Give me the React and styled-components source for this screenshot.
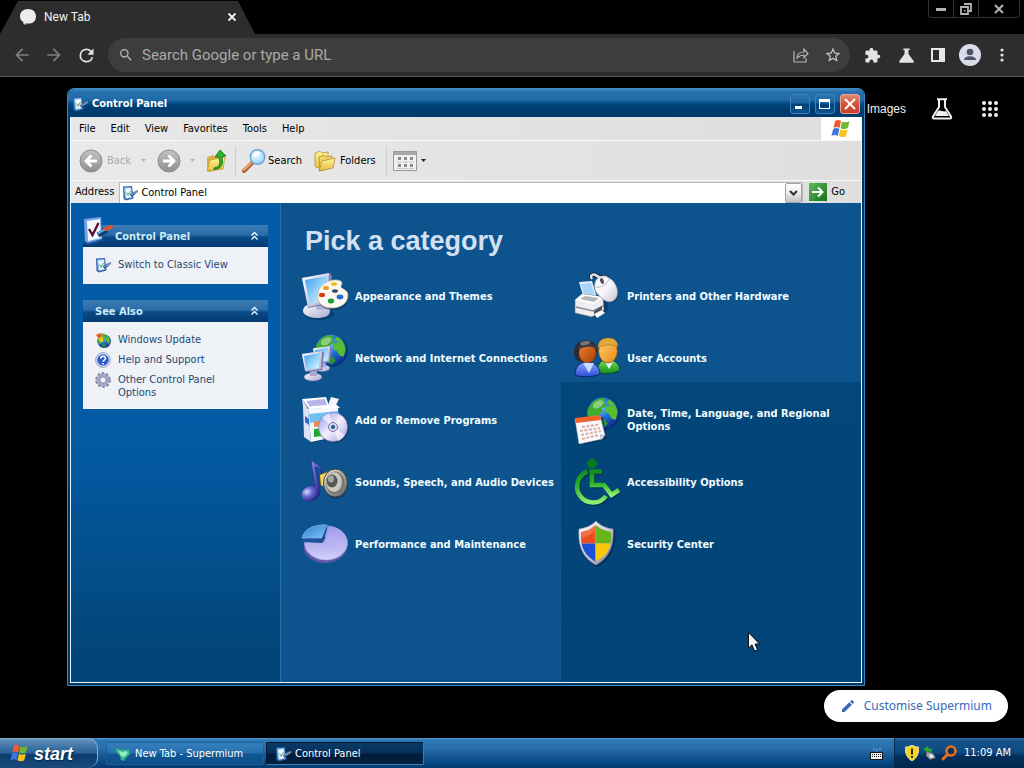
import React from "react";
import styled, { createGlobalStyle, css } from "styled-components";

const Global = createGlobalStyle`
  *, *::before, *::after { box-sizing: border-box; }
  body { margin: 0; background: #000; }
  button, input { font: inherit; color: inherit; margin: 0; padding: 0; border: 0; background: none; outline: 0; }
  a { color: inherit; text-decoration: none; }
  svg { display: block; flex: none; }
`;

const uiFont = `"DejaVu Sans Condensed", "DejaVu Sans", Tahoma, sans-serif`;
const webFont = `Roboto, "Liberation Sans", Arial, sans-serif`;

const Desktop = styled.div`
  position: relative;
  display: flex;
  flex-direction: column;
  min-height: 100vh;
  background: #000;
  overflow: hidden;
  font: 11px/14px ${uiFont};
`;

/* ---------- browser ---------- */

const TabStrip = styled.div`
  display: flex;
  justify-content: space-between;
  align-items: flex-start;
  height: 34px;
  padding-right: 4px;
`;

const Tab = styled.div`
  display: flex;
  align-items: center;
  gap: 8px;
  width: 255px;
  height: 34px;
  padding: 0 17px 0 20px;
  background: #2d2d2d;
  clip-path: polygon(18px 1px, 238px 1px, 255px 34px, 0 34px);
  color: #f4f4f4;
  font: 12px/16px ${webFont};
`;

const TabTitle = styled.span`
  flex: 1;
`;

const PlainButton = styled.button`
  display: flex;
  align-items: center;
  justify-content: center;
  width: ${(p) => p.$w || 24}px;
  height: ${(p) => p.$h || 24}px;
  color: ${(p) => p.$color || "#e3e3e3"};
`;

const FrameButtons = styled.div`
  display: flex;
  border: 1px solid #333;
  border-top: 0;
  border-radius: 0 0 4px 4px;
  & > * + * { border-left: 1px solid #333; }
`;

const BrowserBar = styled.div`
  display: flex;
  align-items: center;
  gap: 8px;
  height: 43px;
  padding: 0 10px;
  background: #2d2d2d;
  border-bottom: 1px solid #555;
`;

const Omnibox = styled.label`
  display: flex;
  flex: 1;
  align-items: center;
  gap: 8px;
  height: 34px;
  margin-left: 2px;
  padding: 0 5px 0 10px;
  border-radius: 17px;
  background: #3d3d3d;
`;

const OmniInput = styled.input`
  flex: 1;
  min-width: 0;
  color: #c8c8c8;
  font: 15px/20px ${webFont};
  &::placeholder { color: #aaa; opacity: 1; }
`;

const NewTabPage = styled.main`
  display: flex;
  flex: 1;
  flex-direction: column;
  align-items: flex-end;
  justify-content: space-between;
  padding: 16px;
`;

const PageLinks = styled.nav`
  display: flex;
  align-items: center;
  gap: 24px;
  height: 32px;
  padding-right: 6px;
  color: #f0f0f0;
  font: 12px/16px "Liberation Sans", Arial, sans-serif;
`;

const CustomiseButton = styled.button`
  display: flex;
  align-items: center;
  gap: 8px;
  height: 32px;
  padding: 0 16px;
  border-radius: 16px;
  background: #fff;
  color: #3569b8;
  font: 12px/20px "Noto Sans", sans-serif;
`;

/* ---------- control panel window ---------- */

const Window = styled.section`
  position: absolute;
  top: 88px;
  right: 159px;
  bottom: 82px;
  left: 67px;
  display: flex;
  flex-direction: column;
  padding: 0 2px 2px;
  border: 1px solid #3e86c0;
  border-radius: 7px 7px 0 0;
  background: #013862;
`;

const TitleBar = styled.header`
  display: flex;
  align-items: center;
  gap: 2px;
  height: 28px;
  margin: 0 -2px;
  padding: 2px 4px 0;
  border-radius: 6px 6px 0 0;
  background: linear-gradient(#4389c0 0, #2570ac 3px, #1f6aa8 11px, #01467f 15px, #003c70 20px, #003b6c);
  color: #fff;
  font-weight: bold;
`;

const WindowTitle = styled.h1`
  flex: 1;
  margin: 0;
  font: inherit;
`;

const CaptionButton = styled.button`
  display: flex;
  align-items: center;
  justify-content: center;
  width: 20px;
  height: 20px;
  margin-left: 3px;
  border: 1px solid ${(p) => (p.$close ? "#e9a294" : "#3f80b6")};
  border-radius: 3px;
  background: ${(p) =>
    p.$close
      ? "linear-gradient(#e58a76, #d4523c 50%, #c5402b)"
      : "linear-gradient(#2b75b0, #1c639f 45%, #003f76 50%, #0b5490)"};
`;

const Chrome = styled.div`
  display: flex;
  flex: 1;
  flex-direction: column;
  min-height: 0;
  border: 1px solid #f2f6fa;
  border-top: 0;
  background: #e3e3e3;
  color: #000;
`;

const MenuBar = styled.nav`
  display: flex;
  align-items: stretch;
  height: 24px;
  padding-left: 8px;
  border-bottom: 1px solid #fafafa;
  background: linear-gradient(90deg, #e8e8e8, #dedede);
`;

const MenuItem = styled.button`
  margin-right: 15px;
`;

const FlagCell = styled.div`
  display: flex;
  align-items: center;
  justify-content: center;
  width: 40px;
  margin-left: auto;
  background: #fff;
`;

const ToolBar = styled.div`
  display: flex;
  align-items: center;
  height: 40px;
  padding-left: 8px;
  border-bottom: 1px solid #fafafa;
  background: linear-gradient(90deg, #e9e9e9, #dfdfdf);
`;

const ToolButton = styled.button`
  display: flex;
  align-items: center;
  gap: ${(p) => p.$gap || 4}px;
  margin-right: ${(p) => p.$after || 0}px;
  color: ${(p) => (p.$dim ? "#a9a9a9" : "#000")};
`;

const Divider = styled.span`
  width: 1px;
  height: 30px;
  margin: 0 6px;
  background: #cdcdcd;
`;

const AddressBar = styled.div`
  display: flex;
  align-items: center;
  height: 22px;
  padding: 0 16px 0 4px;
  background: linear-gradient(90deg, #e9e9e9, #dfdfdf);
`;

const AddressField = styled.div`
  display: flex;
  flex: 1;
  align-items: center;
  gap: 3px;
  height: 21px;
  margin: 0 6px 0 5px;
  padding-left: 2px;
  border: 1px solid #b9b9b9;
  border-bottom: 0;
  background: #fff;
`;

const AddressInput = styled.input`
  flex: 1;
  min-width: 0;
`;

const DropButton = styled.button`
  display: flex;
  align-items: center;
  justify-content: center;
  width: 17px;
  height: 20px;
  border: 1px solid #a2a2a2;
  border-radius: 2px;
  background: linear-gradient(#fff, #ececec 50%, #c2c2c2);
`;

const Content = styled.div`
  display: flex;
  flex: 1;
  min-height: 0;
`;

const Sidebar = styled.aside`
  display: flex;
  flex-direction: column;
  gap: 16px;
  width: 210px;
  padding: 22px 12px 12px;
  border-right: 1px solid #2a6ea8;
  background: linear-gradient(#045ca8, #035ba4 50%, #034578 95%);
`;

const SideHead = styled.h2`
  position: relative;
  display: flex;
  align-items: center;
  justify-content: space-between;
  height: 22px;
  margin: 0;
  padding: 2px 8px 0 ${(p) => (p.$indent ? 32 : 12)}px;
  background: linear-gradient(#3c7cb4, #2a6ca8 45%, #0b4a86 55%, #053a70);
  color: #c9ecfa;
  font: bold 11px/14px ${uiFont};
`;

const HeadIcon = styled.span`
  position: absolute;
  bottom: 0;
  left: 0;
`;

const SideBody = styled.div`
  display: flex;
  flex-direction: column;
  gap: 4px;
  min-height: 37px;
  padding: 10px 12px;
  background: #eef1f5;
`;

const SideLink = styled.a`
  display: flex;
  align-items: flex-start;
  gap: 7px;
  min-height: 16px;
  color: #1d4a74;
  line-height: 13px;
`;

const SideLabel = styled.span`
  padding-top: 1px;
`;

const Categories = styled.div`
  flex: 1;
  min-width: 0;
  padding: 22px 20px;
  background:
    linear-gradient(#034679, #024477) right bottom / 300px 300px no-repeat,
    #0d538e;
`;

const Heading = styled.h2`
  margin: 0 0 15px 4px;
  color: #d3e0f3;
  font: bold 27px/32px "Liberation Sans", Arial, sans-serif;
`;

const CategoryGrid = styled.div`
  display: grid;
  grid-template-columns: 272px 1fr;
  row-gap: 14px;
`;

const Category = styled.a`
  display: flex;
  align-items: center;
  gap: 6px;
  min-height: 48px;
  color: #f0fcff;
  font-weight: bold;
  line-height: 13px;
`;

const Pointer = styled.svg`
  position: absolute;
  top: 632px;
  left: 748px;
`;

/* ---------- task bar ---------- */

const TaskBar = styled.footer`
  display: flex;
  align-items: stretch;
  height: 30px;
  background: linear-gradient(#5a9ccc 0, #2e78b4 2px, #2a70ac 10px, #1a5c98 16px, #084a86 24px, #033a70);
  color: #fff;
`;

const StartButton = styled.button`
  display: flex;
  align-items: center;
  gap: 5px;
  width: 98px;
  padding-left: 10px;
  border: solid #7fb0d6;
  border-width: 1px 1px 0 0;
  border-radius: 0 10px 10px 0;
  background: linear-gradient(#6593ba, #3a72a4 30%, #2a6196 48%, #0d3c6c 54%, #1a4b7c);
  color: #fff;
  font: italic bold 18px/22px "Liberation Sans", Arial, sans-serif;
  text-shadow: 1px 1px 1px #04284c;
`;

const TaskButton = styled.button`
  display: flex;
  align-items: center;
  gap: 4px;
  width: 158px;
  margin: 4px 0 3px ${(p) => (p.$first ? 8 : 2)}px;
  padding-left: 8px;
  border: 1px solid #1d5f9b;
  border-radius: 2px;
  background: linear-gradient(#3580bc, #2671ae 45%, #115693 55%, #0d4f8b);
  ${(p) =>
    p.$active &&
    css`
      border-color: #01162e #3f7fb5 #3f7fb5 #01162e;
      background: linear-gradient(#0a3a68, #06305a 45%, #011c3a 55%, #02203f);
    `}
`;

const LanguageIcon = styled.div`
  display: flex;
  align-items: center;
  margin-left: auto;
  padding: 2px 11px 0 0;
`;

const Tray = styled.div`
  display: flex;
  align-items: center;
  gap: 4px;
  padding: 0 13px 0 10px;
  border-left: 1px solid #01284e;
  background: linear-gradient(#2e6ea4 0, #15528a 3px, #0f4a80 14px, #02305c 18px, #01284e);
`;

const Clock = styled.time`
  margin-left: 3px;
`;

/* ---------- drawings ---------- */

const Gradients = styled.svg`
  position: absolute;
`;

const Grad = ({ id, from, to, mid, x2 = 0, y2 = 1 }) => (
  <linearGradient id={id} x1="0" y1="0" x2={x2} y2={y2}>
    <stop offset="0" stopColor={from} />
    {mid && <stop offset=".5" stopColor={mid} />}
    <stop offset="1" stopColor={to} />
  </linearGradient>
);

const SharedGradients = () => (
  <Gradients width="0" height="0" aria-hidden="true">
    <defs>
      <Grad id="screen" from="#3f9af0" mid="#8fd0fa" to="#e6f7ff" x2={1} />
      <Grad id="shell" from="#ffffff" to="#a9a9d2" x2={1} />
      <Grad id="mouse" from="#ffffff" mid="#f6f6fa" to="#c4c4d4" x2={1} />
      <Grad id="cd" from="#8f8fe0" mid="#f4f1ff" to="#a49ade" x2={1} />
      <Grad id="pie" from="#8f8ae0" to="#d6d2fb" />
      <Grad id="slice" from="#2f7fd0" to="#7cc0f4" x2={1} />
      <Grad id="wheel" from="#0f8f1c" mid="#2cb42c" to="#8ff070" />
      <Grad id="folder" from="#fff6a0" to="#e8bc3c" />
      <Grad id="grey" from="#c4c4c4" to="#8e8e8e" />
      <Grad id="note" from="#8688ee" to="#1c1c80" x2={1} />
      <Grad id="go" from="#5cbc58" to="#14701c" x2={1} />
      <Grad id="skin" from="#ffcf6c" to="#e88a18" x2={1} />
      <Grad id="dark" from="#f08434" to="#a83c04" x2={1} />
      <Grad id="blueCoat" from="#86a4ff" to="#2c4cd4" />
      <Grad id="greenCoat" from="#7ce060" to="#148c20" />
      <Grad id="steel" from="#ffffff" mid="#cfcfe0" to="#70708c" x2={1} />
      <Grad id="cone" from="#f6f6f0" mid="#a8a8a0" to="#60605c" x2={1} />
      <radialGradient id="ocean" cx=".38" cy=".3" r=".75">
        <stop offset="0" stopColor="#8fd4ff" />
        <stop offset=".45" stopColor="#2474e0" />
        <stop offset="1" stopColor="#082c8c" />
      </radialGradient>
      <radialGradient id="ball" cx=".35" cy=".3" r=".75">
        <stop offset="0" stopColor="#d8d8ff" />
        <stop offset=".4" stopColor="#6a6ad8" />
        <stop offset="1" stopColor="#1c1c78" />
      </radialGradient>
      <radialGradient id="lens" cx=".4" cy=".35" r=".7">
        <stop offset="0" stopColor="#ffffff" />
        <stop offset="1" stopColor="#84ccf8" />
      </radialGradient>
    </defs>
  </Gradients>
);

const Ico = ({ w = 16, h = w, vb = `0 0 ${w} ${h}`, children }) => (
  <svg width={w} height={h} viewBox={vb} aria-hidden="true">
    {children}
  </svg>
);

const Globe = ({ cx, cy, r }) => (
  <g transform={`translate(${cx} ${cy}) scale(${r / 16})`}>
    <circle r="16.8" cx=".6" cy=".8" fill="#022a58" opacity=".6" />
    <circle r="16" fill="url(#ocean)" />
    <path d="M-13-8C-9-15-2-16 3-15l-2 4 3 3-5 3 1 4-5 3-3 5-4 1-4-6c-1-4 1-8 3-10z" fill="#3fae2c" />
    <path d="M6-14c5 2 9 8 9 14l-2 7-4-1-3-5-4-2 1-5 4-2-3-3z" fill="#58bc34" />
    <path d="M-4 6l6 1 3 4-4 4-5-2z" fill="#2c9430" />
    <ellipse cx="-5" cy="-9" rx="6" ry="3.5" fill="#fff" opacity=".4" transform="rotate(-30 -5 -9)" />
  </g>
);

const PanelGlyph = () => (
  <Ico>
    <path d="M1 1.500L10 1l1.500 12.500L4 15.500 1.500 14z" fill="#2c62a8" />
    <path d="M2 2.500l7.300-.4 1 10.400-6 1.600-1.500-1z" fill="#8cbcec" />
    <path d="M3.300 3.500l5.400-.3.800 8.800-5 1.300z" fill="#f2f9ff" />
    <path d="M4.500 7.500l1.700 2.500 2.300-4" fill="none" stroke="#7cb088" strokeWidth="1.200" />
    <path d="M8.500 10.500L13 7.800" stroke="#24508c" strokeWidth="3" />
    <path d="M9 9.800l4-2.400" stroke="#6cb4e0" strokeWidth="1.200" />
    <path d="M12.500 7.800l2.700-1.600" stroke="#7c8ca8" strokeWidth="2.200" strokeLinecap="round" />
  </Ico>
);

const BigPanelGlyph = () => (
  <Ico w={32}>
    <path d="M0 3l19-2 1 25-15 4-5-2z" fill="#1c50a0" />
    <path d="M1 4l17-2 1 22-14 4-3-2z" fill="#6fa6e8" />
    <path d="M4 6l13-2 1 19-13 3z" fill="#f4f6ff" />
    <path d="M6 14l3.500 6 6-12" fill="none" stroke="#5c1030" strokeWidth="2.400" />
    <path d="M15 20l9-5" stroke="#143c70" strokeWidth="5" />
    <path d="M15 18.500l8-4.500" stroke="#68b4e0" strokeWidth="2" />
    <path d="M23 14l5-2" stroke="#e4542c" strokeWidth="4" strokeLinecap="round" />
  </Ico>
);

const Flag = ({ w = 20 }) => (
  <Ico w={w} vb="0 0 20 20">
    <path d="M4 2c2-1.500 4-1.500 6 0L8.600 9C6.500 7.700 4.800 7.800 2.500 9z" fill="#ee5a2c" />
    <path d="M11 2.500c2.500 1.300 5 1 7.500-.3L16.800 9c-2.500 1.400-4.800 1.400-7.200.2z" fill="#6cb830" />
    <path d="M2.200 10c2.200-1.200 4-1.200 6.200 0L6.800 17c-2-1.400-4.200-1.400-6.400 0z" fill="#3d78e0" />
    <path d="M9.400 10.200c2.500 1.400 4.700 1.200 7.200 0L15 17.200c-2.600 1.300-4.800 1.100-7.200-.1z" fill="#f8c41c" />
  </Ico>
);

const Chevrons = () => (
  <Ico w={11} h={12}>
    <path d="M2.500 4.500l3-3 3 3M2.500 8.500l3-3 3 3" fill="none" stroke="#e6f6ff" strokeWidth="1.400" />
  </Ico>
);

const RoundArrow = ({ back }) => (
  <Ico w={24}>
    <circle cx="12" cy="12" r="11" fill="url(#grey)" stroke="#8a8a8a" />
    <path
      d={back ? "M18 12H7m5.500-5.500L7 12l5.500 5.500" : "M6 12h11m-5.500-5.500L17 12l-5.500 5.500"}
      fill="none"
      stroke="#fff"
      strokeWidth="2.800"
    />
  </Ico>
);

const Triangle = ({ color }) => (
  <Ico w={5} h={3}>
    <path d="M0 0h5L2.500 3z" fill={color} />
  </Ico>
);

const AppearanceIcon = () => (
  <Ico w={48}>
    <ellipse cx="18" cy="42" rx="15" ry="6" fill="#022f5c" opacity=".5" />
    <path d="M2 39c0-5 6-8 13-8s14 3 14 8-6 7-13 7S2 43 2 39z" fill="url(#shell)" />
    <path d="M14 29l12-1-1 9-9 1z" fill="#b0b0d4" />
    <path d="M1 6L29 1l2 3-3 28L7 36z" fill="#7880b4" />
    <path d="M1 6L28 1l-2 30L7 35z" fill="url(#shell)" />
    <path d="M4 8l22-4-2 25L9 32z" fill="url(#screen)" />
    <path d="M18 28C16 17 25 9 36 9c6 0 7 3 5 6 4 1 7 5 7 10-1 9-8 13-16 13-7 0-13-3-14-9z" fill="#0a2a50" opacity=".55" />
    <path d="M17 27C15 16 24 8 35 8c6 0 7 3 5 6-1 3 7 3 7 9 0 8-7 13-16 13-7 0-13-3-14-9z" fill="#faf8f0" stroke="#c8b89c" strokeWidth=".8" />
    <ellipse cx="25" cy="16" rx="3" ry="2" fill="#ee9c20" />
    <ellipse cx="33" cy="12" rx="3" ry="1.800" fill="#e8c018" />
    <ellipse cx="21" cy="23" rx="3" ry="2.200" fill="#d83c14" />
    <ellipse cx="30" cy="29" rx="3.200" ry="2.400" fill="#18a030" />
    <ellipse cx="39" cy="25" rx="3.400" ry="2.400" fill="#2468d4" />
    <ellipse cx="34" cy="19" rx="3" ry="1.800" fill="#38446c" />
  </Ico>
);

const MiniMonitor = ({ x, y, s = 1 }) => (
  <g transform={`translate(${x} ${y}) scale(${s})`}>
    <ellipse cx="11" cy="26" rx="9" ry="4" fill="url(#shell)" stroke="#6670a4" strokeWidth=".5" />
    <path d="M8 18h7v7H8z" fill="#a8a8d0" />
    <path d="M0 3L20 0l2 2-2 17-16 2z" fill="#707cb4" />
    <path d="M0 3L20 0l-1 18-16 2z" fill="url(#shell)" />
    <path d="M2 5l16-3-1 15-13 2z" fill="url(#screen)" />
  </g>
);

const NetworkIcon = () => (
  <Ico w={48}>
    <Globe cx={30} cy={16} r={15.500} />
    <MiniMonitor x={12} y={12} s={0.85} />
    <MiniMonitor x={1} y={17} s={1} />
  </Ico>
);

const ProgramsIcon = () => (
  <Ico w={48}>
    <path d="M5 14l31-3 3 29-28 7-6-4z" fill="#022f5c" opacity=".5" />
    <path d="M1 3l6 10 3 33-7-5L2 10z" fill="#dfe2f4" />
    <path d="M7 13l30-2 1 29-28 6z" fill="#f6f8ff" />
    <path d="M8 18l29-3 .5 9L9 27z" fill="#6ec0f0" />
    <path d="M1 3l24-2 3 9-20 3z" fill="#fff" />
    <path d="M5 5l19-2 2 6-17 2z" fill="#b8b4ec" />
    <path d="M27 9l3-8 8 2-4 8z" fill="#f4f6ff" />
    <path d="M8 13l3-3 25-1 3 3z" fill="#fff" />
    <path d="M4 20l4 3v6l-4-3z" fill="#2468d0" />
    <path d="M13 26l7-2 1 6-8 1z" fill="#f08848" />
    <path d="M13 33l8-1v8l-8 1z" fill="#22a830" />
    <circle cx="33" cy="32" r="15" fill="#0a2a50" opacity=".5" />
    <circle cx="32" cy="31" r="14.500" fill="url(#cd)" stroke="#8480b8" strokeWidth=".7" />
    <path d="M32 31L21 22a14 14 0 0 1 7-5zM32 31l12 8a14 14 0 0 1-7 6z" fill="#fff" opacity=".6" />
    <circle cx="32" cy="31" r="4.500" fill="#d8d8f0" stroke="#7674a8" />
    <circle cx="32" cy="31" r="2" fill="#1c568f" />
  </Ico>
);

const SoundsIcon = () => (
  <Ico w={48}>
    <path d="M10 3h2c1 3 10 3 9 13-1-5-5-7-7-7l5 24-1 4h-3z" fill="url(#note)" stroke="#24247c" strokeWidth=".6" />
    <ellipse cx="9.500" cy="36" rx="9" ry="7.500" fill="url(#ball)" transform="rotate(-20 9 36)" />
    <path d="M19 17l13-5 3 22-15-7z" fill="#e8a41c" stroke="#7c5410" />
    <path d="M19 17l8-3 1 17-8-4z" fill="#f8d060" />
    <ellipse cx="35" cy="26" rx="12" ry="15" fill="#18304c" opacity=".6" />
    <ellipse cx="34.500" cy="25" rx="12" ry="14" fill="url(#cone)" stroke="#3c3c38" />
    <ellipse cx="34" cy="25" rx="9.500" ry="11.500" fill="#787874" />
    <ellipse cx="33" cy="24" rx="8" ry="10" fill="#c8c8c0" />
    <ellipse cx="31" cy="23" rx="5.500" ry="6.500" fill="#565654" />
    <ellipse cx="30" cy="21" rx="3" ry="3.500" fill="#a8a8a4" />
  </Ico>
);

const PerformanceIcon = () => (
  <Ico w={48}>
    <path d="M3 24v6c3 9 13 14 23 13 12-1 19-8 20-16v-6z" fill="#5c58a8" />
    <ellipse cx="25" cy="23" rx="21.500" ry="17" fill="url(#pie)" stroke="#a8a4e8" strokeWidth=".6" />
    <path d="M25 22l3-16c11 1 18 8 18 16 0 3-1 6-3 8z" fill="#c4beff" opacity=".35" />
    <path d="M1 18v4l20 1 4-6z" fill="#1c5098" />
    <path d="M1 18C3 9 13 4 26 5l-5 13z" fill="url(#slice)" stroke="#9cd0fa" strokeWidth=".5" />
    <path d="M21 18l5-13v4l-4 14z" fill="#184c94" />
  </Ico>
);

const PrinterIcon = () => (
  <Ico w={48}>
    <path d="M19 7c-3-4 2-6 5-3 4 4 9-3 11 4" fill="none" stroke="#101c2c" strokeWidth="4" />
    <path d="M19 7c-3-4 2-6 5-3 4 4 9-3 11 4" fill="none" stroke="#e4e4ec" strokeWidth="2.500" />
    <path d="M5 28l5-5 24 2 1 13-11 8L3 42z" fill="#08284c" opacity=".5" />
    <path d="M6 10l13-1 5 17-13 1z" fill="#dff0ff" />
    <path d="M8 12l10-1 4 13-10 1z" fill="#a8d4f8" />
    <path d="M2 28l7-6 21 3 1 13-12 7-17-4z" fill="#eeeef2" stroke="#70707c" strokeWidth=".7" />
    <path d="M2 28l7-6 21 3-9 7z" fill="#fff" />
    <path d="M7 27l5-3 14 2-5 4z" fill="#b4b4bc" />
    <path d="M3 35l17 4 10-5" fill="none" stroke="#8c8c98" strokeWidth="1.600" />
    <path d="M21 39l8-5v4l-8 5z" fill="#50505c" />
    <path d="M21 42l8-4 3 3-8 5z" fill="#fff" stroke="#888" strokeWidth=".4" />
    <path d="M23 18c-2-9 4-14 12-12 8 3 12 12 10 19-2 6-9 8-14 3-4-4-7-5-8-10z" fill="#0a2440" opacity=".5" />
    <path d="M22 17c-2-9 4-14 12-12 8 3 12 12 10 19-2 6-9 8-14 3-4-4-7-5-8-10z" fill="url(#mouse)" stroke="#9898b0" strokeWidth=".6" />
    <path d="M23 15c4 1 11-2 13-8" fill="none" stroke="#b4b4c4" />
    <ellipse cx="29" cy="9" rx="1.800" ry="3" fill="#50506c" transform="rotate(-20 29 9)" />
  </Ico>
);

const UsersIcon = () => (
  <Ico w={48}>
    <path d="M24 38c0-8 5-13 11-13s12 6 12 11c-5 4-17 5-23 2z" fill="url(#greenCoat)" stroke="#053c18" strokeWidth=".8" />
    <path d="M31 26l5 9 5-9z" fill="#e8fff0" />
    <ellipse cx="35" cy="17" rx="9.500" ry="12" fill="url(#skin)" stroke="#6c3c04" strokeWidth=".7" />
    <path d="M25 14C25 6 30 4 36 4s9 4 9 9c-5-3-13-3-20 1z" fill="#e0aa3c" stroke="#8c6014" strokeWidth=".5" />
    <path d="M2 41c0-8 5-13 12-13s13 5 13 12c-6 3-19 4-25 1z" fill="url(#blueCoat)" stroke="#081c60" strokeWidth=".8" />
    <path d="M10 29l6 10 5-10z" fill="#c8dcff" />
    <path d="M1 21C0 11 6 6 13 6s12 5 11 13-6 9-12 9S3 27 1 21z" fill="#2c2c30" />
    <ellipse cx="14.500" cy="19" rx="8.500" ry="10" fill="url(#dark)" />
    <path d="M5 16C6 7 19 5 24 15c-6-3-12-3-19 1z" fill="#3c3c42" />
    <ellipse cx="12" cy="9" rx="5" ry="2" fill="#a0a0a8" opacity=".6" transform="rotate(-12 12 9)" />
  </Ico>
);

const RegionalIcon = () => (
  <Ico w={48}>
    <Globe cx={30} cy={17} r={15.500} />
    <path d="M4 24l26-3 4 22-24 6z" fill="#022448" opacity=".5" />
    <path d="M2 23l25-3 5 19-3 4-23 5z" fill="#fafaff" stroke="#a8a8bc" strokeWidth=".5" />
    <path d="M2 22l25-3 1 5-25 3z" fill="#f06428" />
    <path d="M9 31l17-2.500M7 35l20-3M8 39l20-4M9 43l17-4" stroke="#dcb0a4" strokeWidth="2.200" strokeDasharray="3 1.500" />
    <path d="M27 43l0-5 5 1z" fill="#c4c4d4" />
  </Ico>
);

const AccessShape = () => (
  <>
    <path d="M14.500 13.500A16 16 0 1 0 33 38" />
    <path d="M29 13.500H19V27H31L38.500 37 46 32" />
  </>
);

const AccessIcon = () => (
  <Ico w={48}>
    <g transform="translate(1 1)" opacity=".5" fill="none" stroke="#011c38" strokeWidth="5">
      <AccessShape />
    </g>
    <circle cx="19" cy="5.500" r="4.800" fill="#087c18" />
    <g fill="none" stroke="url(#wheel)" strokeWidth="4.600">
      <AccessShape />
    </g>
  </Ico>
);

const ShieldIcon = ({ w = 48 }) => (
  <Ico w={w} vb="0 0 48 48">
    <path d="M24 3c5 5 11 7 18 8 1 14-2 28-18 36C9 39 6 25 7 11c6-1 12-3 17-8z" fill="#022040" opacity=".6" />
    <path d="M23 1c5 5 10 7 17 8 1 14-2 28-17 36C8 37 5 23 6 9c6-1 12-3 17-8z" fill="url(#steel)" stroke="#8c8ca4" strokeWidth=".6" />
    <path d="M22.500 5v18.500H8.500C8 20 8 16 8 12c6-1 10-3 14.500-7z" fill="#ee4c1c" />
    <path d="M22.500 5v18.500H37.500C38 20 38 16 38 12c-6-1-10-3-15.500-7z" fill="#68b41c" />
    <path d="M22.500 23.500v18C14 37 10 31 8.500 23.500z" fill="#1c50d8" />
    <path d="M22.500 23.500v18C32 37 36 31 37.500 23.500z" fill="#f8c80c" />
    <path d="M8 12c6-1 10-3 15-7l-2 7c-4 3-8 5-12 6z" fill="#fff" opacity=".2" />
  </Ico>
);

const FolderUp = () => (
  <Ico w={24}>
    <path d="M2 8l6-2 2 2 8-1v13l-14 3-2-2z" fill="#d8b040" />
    <path d="M2 22l3-11 15-3-2 12z" fill="url(#folder)" stroke="#b48c24" strokeWidth=".6" />
    <path d="M9 19c7-1 6-6 5-11h-4l5-7 6 6-4 .5c1 6 1 12-8 13z" fill="#2cb42c" stroke="#0c6c14" strokeWidth=".8" />
  </Ico>
);

const Magnifier = () => (
  <Ico w={24}>
    <path d="M10 14l-8 8" stroke="#a85c30" strokeWidth="4" strokeLinecap="round" />
    <path d="M9 14l-7 7" stroke="#f4a068" strokeWidth="2" strokeLinecap="round" />
    <circle cx="15.500" cy="8" r="7.300" fill="url(#lens)" stroke="#6ca4d4" strokeWidth="1.400" />
    <path d="M12 7c1-3 4-4 6-3" fill="none" stroke="#fff" strokeWidth="1.600" />
  </Ico>
);

const FoldersGlyph = () => (
  <Ico w={22} h={24}>
    <path d="M1 4l5-2 2 2 6-1v11L3 19l-2-2z" fill="url(#folder)" stroke="#a88420" strokeWidth=".7" />
    <path d="M5 8l5-2 2 2 6-1v11L6 22z" fill="#f0d468" stroke="#a88420" strokeWidth=".7" />
    <path d="M5 22l3-10 13-3-2 10z" fill="url(#folder)" stroke="#a88420" strokeWidth=".7" />
  </Ico>
);

const ViewsGlyph = () => (
  <Ico w={24} h={20}>
    <path d="M.5.5h23v19H.5z" fill="#f0f0f0" stroke="#999" />
    <path d="M1 1h22v3H1z" fill="#a8a8a8" />
    <path d="M5 6h3v3H5zm6 0h3v3h-3zm6 0h3v3h-3zM5 13h3v3H5zm6 0h3v3h-3zm6 0h3v3h-3z" fill="#8c8c8c" />
    <path d="M4 11h5m1 0h5m1 0h5M4 17.500h5m1 0h5m1 0h5" stroke="#c4c4c4" />
  </Ico>
);

const UpdateIcon = () => (
  <Ico>
    <Globe cx={9} cy={9} r={6.500} />
    <path d="M1 3l4-2 2 3-3 3z" fill="#e85c28" />
    <path d="M6 1l4 1 0 4-3-1z" fill="#68b030" />
    <path d="M3 7l3-2 3 3-3 3z" fill="#f4c020" />
  </Ico>
);

const HelpIcon = () => (
  <Ico>
    <circle cx="8" cy="8" r="7.300" fill="#e8ecf8" stroke="#8c98c0" />
    <circle cx="8" cy="8" r="5.800" fill="#2c5cd0" />
    <path d="M5.800 6.500c0-3 4.600-3 4.600 0 0 1.500-2.300 1.600-2.300 3.300M8 11v1.600" fill="none" stroke="#fff" strokeWidth="1.600" />
  </Ico>
);

const GearIcon = () => (
  <Ico>
    <circle cx="8" cy="8" r="6.300" fill="none" stroke="#7c7c9c" strokeWidth="3" strokeDasharray="2.500 1.450" />
    <circle cx="8" cy="8" r="4.700" fill="none" stroke="#a4a4c4" strokeWidth="3.600" />
    <circle cx="8" cy="8" r="3" fill="#eef1f5" stroke="#6c6c90" strokeWidth=".6" />
  </Ico>
);

const mdPath = (d, size = 18, color = "currentColor") => (
  <svg width={size} height={size} viewBox="0 0 24 24" fill={color} aria-hidden="true">
    <path d={d} />
  </svg>
);

const PATHS = {
  back: "M20 11H7.830l5.590-5.590L12 4l-8 8 8 8 1.410-1.410L7.830 13H20v-2z",
  forward: "M12 4l-1.410 1.410L16.170 11H4v2h12.170l-5.580 5.590L12 20l8-8z",
  reload:
    "M17.650 6.350A7.958 7.958 0 0 0 12 4a8 8 0 1 0 7.730 10h-2.080A6 6 0 1 1 12 6c1.660 0 3.140.690 4.220 1.780L13 11h7V4l-2.350 2.350z",
  search:
    "M15.500 14h-.790l-.280-.270A6.500 6.500 0 1 0 13.730 14.430l.270.280v.790l5 4.990L20.490 19l-4.990-5zm-6 0a4.500 4.500 0 1 1 0-9 4.500 4.500 0 0 1 0 9z",
  star:
    "M22 9.240l-7.190-.620L12 2 9.190 8.630 2 9.240l5.460 4.730L5.820 21 12 17.270 18.180 21l-1.630-7.030L22 9.240zM12 15.400l-3.760 2.270 1-4.280-3.320-2.880 4.380-.380L12 6.100l1.710 4.040 4.380.380-3.320 2.880 1 4.280L12 15.400z",
  puzzle:
    "M20.500 11H19V7a2 2 0 0 0-2-2h-4V3.500a2.500 2.500 0 0 0-5 0V5H4a2 2 0 0 0-2 2v3.800h1.500a2.700 2.700 0 0 1 0 5.400H2V20c0 1.100.900 2 2 2h3.800v-1.500a2.700 2.700 0 0 1 5.400 0V22H17a2 2 0 0 0 2-2v-4h1.500a2.500 2.500 0 0 0 0-5z",
  pencil:
    "M3 17.250V21h3.750L17.810 9.940l-3.750-3.750L3 17.250zM20.710 7.040a1 1 0 0 0 0-1.410l-2.340-2.340a1 1 0 0 0-1.410 0l-1.830 1.830 3.750 3.750 1.830-1.830z",
  flask: "M8 3h8v2h-1.500v5l6.500 9a1.300 1.300 0 0 1-1 2h-16a1.300 1.300 0 0 1-1-2L9.500 10V5H8z",
};

const categories = [
  ["Appearance and Themes", AppearanceIcon],
  ["Printers and Other Hardware", PrinterIcon],
  ["Network and Internet Connections", NetworkIcon],
  ["User Accounts", UsersIcon],
  ["Add or Remove Programs", ProgramsIcon],
  ["Date, Time, Language, and Regional Options", RegionalIcon],
  ["Sounds, Speech, and Audio Devices", SoundsIcon],
  ["Accessibility Options", AccessIcon],
  ["Performance and Maintenance", PerformanceIcon],
  ["Security Center", ShieldIcon],
];

const menus = ["File", "Edit", "View", "Favorites", "Tools", "Help"];

const Browser = () => (
  <>
    <TabStrip>
      <Tab>
        <Ico>
          <path d="M8 0c5 0 8 3 8 7.500S13 14.500 9 14.500c-2 0-3.500-.2-4 .3 0 .6 1 .8 2 1C3.500 16 3 14 3.300 13 1.300 12 0 10 0 7.300 0 3 3.500 0 8 0z" fill="#ececec" />
        </Ico>
        <TabTitle>New Tab</TabTitle>
        <PlainButton $w={12} aria-label="Close tab">
          <Ico w={10}>
            <path d="M1.500 1.500l7 7m0-7l-7 7" stroke="#f4f4f4" strokeWidth="1.800" />
          </Ico>
        </PlainButton>
      </Tab>
      <FrameButtons>
        <PlainButton $w={24} $h={17} aria-label="Minimise">
          <Ico w={10} h={4}><path d="M0 1h10v3H0z" fill="#b4b4b4" /></Ico>
        </PlainButton>
        <PlainButton $w={25} $h={17} aria-label="Restore">
          <Ico w={12}>
            <path d="M4 1h7v7H9M1 4h7v7H1z" fill="none" stroke="#b4b4b4" strokeWidth="1.800" />
            <path d="M4 7h1.500v1.500H4z" fill="#b4b4b4" />
          </Ico>
        </PlainButton>
        <PlainButton $w={41} $h={17} aria-label="Close">
          <Ico w={10}><path d="M1 1l8 8m0-8L1 9" stroke="#b4b4b4" strokeWidth="2" /></Ico>
        </PlainButton>
      </FrameButtons>
    </TabStrip>
    <BrowserBar>
      <PlainButton $color="#7e7e7e" aria-label="Back">{mdPath(PATHS.back, 20)}</PlainButton>
      <PlainButton $color="#7e7e7e" aria-label="Forward">{mdPath(PATHS.forward, 20)}</PlainButton>
      <PlainButton aria-label="Reload">{mdPath(PATHS.reload, 21)}</PlainButton>
      <Omnibox>
        {mdPath(PATHS.search, 16, "#b8b8b8")}
        <OmniInput aria-label="Address and search bar" placeholder="Search Google or type a URL" />
        <PlainButton $color="#b8b8b8" aria-label="Share">
          <Ico w={16}>
            <path d="M1 4v11h12v-4M4 11c0-4 3-6 7-6V2l4 4.500-4 4V8c-3 0-5 1-7 3z" fill="none" stroke="#b8b8b8" strokeWidth="1.200" />
          </Ico>
        </PlainButton>
        <PlainButton $color="#c8c8c8" aria-label="Bookmark">{mdPath(PATHS.star, 18)}</PlainButton>
      </Omnibox>
      <PlainButton $w={28} aria-label="Extensions">{mdPath(PATHS.puzzle, 17)}</PlainButton>
      <PlainButton aria-label="Experiments">{mdPath(PATHS.flask, 19)}</PlainButton>
      <PlainButton aria-label="Side panel">
        <Ico w={14}>
          <path d="M0 0h14v14H0zm2 2v10h6V2z" fill="#e8e8e8" fillRule="evenodd" />
        </Ico>
      </PlainButton>
      <PlainButton aria-label="Profile">
        <Ico w={22}>
          <circle cx="11" cy="11" r="11" fill="#dadde8" />
          <circle cx="11" cy="8" r="3.300" fill="#4c5468" />
          <path d="M5 16c0-5 12-5 12 0z" fill="#4c5468" />
        </Ico>
      </PlainButton>
      <PlainButton aria-label="Menu">
        <Ico w={4} h={14}>
          <g fill="#e4e4e4"><circle cx="2" cy="2" r="1.600" /><circle cx="2" cy="7" r="1.600" /><circle cx="2" cy="12" r="1.600" /></g>
        </Ico>
      </PlainButton>
    </BrowserBar>
    <NewTabPage>
      <PageLinks>
        <a href="#images">Images</a>
        <PlainButton aria-label="Search Labs">
          <Ico w={22}>
            <path d="M6 1.200h10M8 2v7L2 18.500c-.6 1.200 0 2 1 2h16c1 0 1.600-.8 1-2L14 9V2" fill="none" stroke="#f0f0f0" strokeWidth="2" />
            <path d="M7 13c3-1.500 5 1.500 8 0l3 5H4z" fill="#f0f0f0" />
          </Ico>
        </PlainButton>
        <PlainButton aria-label="Google apps">
          <Ico w={18}>
            <g fill="#f0f0f0">
              {[3, 9, 15].map((y) => [3, 9, 15].map((x) => <circle key={`${x}-${y}`} cx={x} cy={y} r="2" />))}
            </g>
          </Ico>
        </PlainButton>
      </PageLinks>
      <CustomiseButton>{mdPath(PATHS.pencil, 16)}Customise Supermium</CustomiseButton>
    </NewTabPage>
  </>
);

const ControlPanel = () => (
  <Window>
    <TitleBar>
      <PanelGlyph />
      <span />
      <WindowTitle>Control Panel</WindowTitle>
      <CaptionButton aria-label="Minimise">
        <Ico w={12}><path d="M1 8h7v3H1z" fill="#fff" /></Ico>
      </CaptionButton>
      <CaptionButton aria-label="Maximise">
        <Ico w={12}><path d="M0 1h11v10H0zm1 3v6h9V4z" fill="#fff" fillRule="evenodd" /></Ico>
      </CaptionButton>
      <CaptionButton $close aria-label="Close">
        <Ico w={12}><path d="M1 1l10 10m0-10L1 11" stroke="#fff" strokeWidth="2" /></Ico>
      </CaptionButton>
    </TitleBar>
    <Chrome>
      <MenuBar>
        {menus.map((m) => <MenuItem key={m}>{m}</MenuItem>)}
        <FlagCell><Flag w={20} /></FlagCell>
      </MenuBar>
      <ToolBar>
        <ToolButton $dim $after={10}><RoundArrow back />Back</ToolButton>
        <ToolButton $dim $after={11} aria-label="Back history"><Triangle color="#b4b4b4" /></ToolButton>
        <ToolButton $dim $after={9} aria-label="Forward"><RoundArrow /></ToolButton>
        <ToolButton $dim $after={10} aria-label="Forward history"><Triangle color="#b4b4b4" /></ToolButton>
        <ToolButton aria-label="Up"><FolderUp /></ToolButton>
        <Divider />
        <ToolButton $gap={2} $after={12}><Magnifier />Search</ToolButton>
        <ToolButton $after={4}><FoldersGlyph />Folders</ToolButton>
        <Divider />
        <ToolButton aria-label="Views"><ViewsGlyph /><Triangle color="#202020" /></ToolButton>
      </ToolBar>
      <AddressBar>
        <label htmlFor="address">Address</label>
        <AddressField>
          <PanelGlyph />
          <AddressInput id="address" defaultValue="Control Panel" />
          <DropButton aria-label="Show addresses">
            <Ico w={9} h={6}><path d="M1 1l3.500 3.500L8 1" fill="none" stroke="#303030" strokeWidth="2" /></Ico>
          </DropButton>
        </AddressField>
        <ToolButton>
          <Ico w={18}>
            <path d="M0 0h18v18H0z" fill="url(#go)" />
            <path d="M3 9h10M9 4.500L13.500 9 9 13.500" fill="none" stroke="#fff" strokeWidth="2" />
          </Ico>
          Go
        </ToolButton>
      </AddressBar>
      <Content>
        <Sidebar>
          <section>
            <SideHead $indent>
              <HeadIcon><BigPanelGlyph /></HeadIcon>
              Control Panel
              <Chevrons />
            </SideHead>
            <SideBody>
              <SideLink href="#classic"><PanelGlyph /><SideLabel>Switch to Classic View</SideLabel></SideLink>
            </SideBody>
          </section>
          <section>
            <SideHead>See Also<Chevrons /></SideHead>
            <SideBody>
              <SideLink href="#update"><UpdateIcon /><SideLabel>Windows Update</SideLabel></SideLink>
              <SideLink href="#help"><HelpIcon /><SideLabel>Help and Support</SideLabel></SideLink>
              <SideLink href="#other"><GearIcon /><SideLabel>Other Control Panel Options</SideLabel></SideLink>
            </SideBody>
          </section>
        </Sidebar>
        <Categories>
          <Heading>Pick a category</Heading>
          <CategoryGrid>
            {categories.map(([name, Icon]) => (
              <Category key={name} href="#category"><Icon />{name}</Category>
            ))}
          </CategoryGrid>
        </Categories>
      </Content>
    </Chrome>
  </Window>
);

const Tasks = () => (
  <TaskBar>
    <StartButton><Flag w={19} />start</StartButton>
    <TaskButton $first>
      <Ico>
        <path d="M1 2l6 2 7-1 1 5-4 4-2 3-3-1-1-4-4-4z" fill="#35b08c" />
        <path d="M3 4l4 2 4-1 2 2-4 4-3-1z" fill="#8cf0c4" />
      </Ico>
      New Tab - Supermium
    </TaskButton>
    <TaskButton $active><PanelGlyph />Control Panel</TaskButton>
    <LanguageIcon>
      <Ico w={13} h={12}>
        <path d="M3 1h2m1 1h2m1-1h2" stroke="#a0b4c8" />
        <path d="M0 4h13v8H0z" fill="#101820" />
        <path d="M1 5h11v6H1z" fill="#f0f0f0" />
        <path d="M2 6.500h9M2 8.500h9" stroke="#202020" strokeDasharray="1 1" />
      </Ico>
    </LanguageIcon>
    <Tray>
      <Ico w={14} h={16}>
        <path d="M7 0c2 1.500 4 2 6.500 2 .5 6-1 10.500-6.500 14C1.500 12.500 0 8 .5 2 3 2 5 1.500 7 0z" fill="#f4d428" stroke="#fff4b0" strokeWidth=".8" />
        <path d="M7 3.500v6M7 11v2" stroke="#201800" strokeWidth="1.800" />
      </Ico>
      <Ico w={14} h={16}>
        <path d="M3 6l7 2 3 5-6 2-4-4z" fill="#8c9cac" stroke="#203040" strokeWidth=".7" />
        <path d="M6 9l4 1 1 2-4 1z" fill="#e0ecf4" />
        <path d="M0 4l5-3v2l4 1-1 4-3-2v2z" fill="#28a82c" />
      </Ico>
      <Ico>
        <path d="M7 9l-5 5" stroke="#e8701c" strokeWidth="3" strokeLinecap="round" />
        <circle cx="10" cy="6" r="4.500" fill="#06335e" stroke="#e8701c" strokeWidth="2.600" />
      </Ico>
      <Clock>11:09 AM</Clock>
    </Tray>
  </TaskBar>
);

export default function App() {
  return (
    <Desktop>
      <Global />
      <SharedGradients />
      <Browser />
      <Tasks />
      <ControlPanel />
      <Pointer width="12" height="20" viewBox="0 0 12 20" aria-hidden="true">
        <path d="M.5.5v15.500l3.500-3.200L6.500 19l3-1.200L7 12h4.500z" fill="#f8f8f8" stroke="#000" strokeWidth=".9" />
      </Pointer>
    </Desktop>
  );
}
